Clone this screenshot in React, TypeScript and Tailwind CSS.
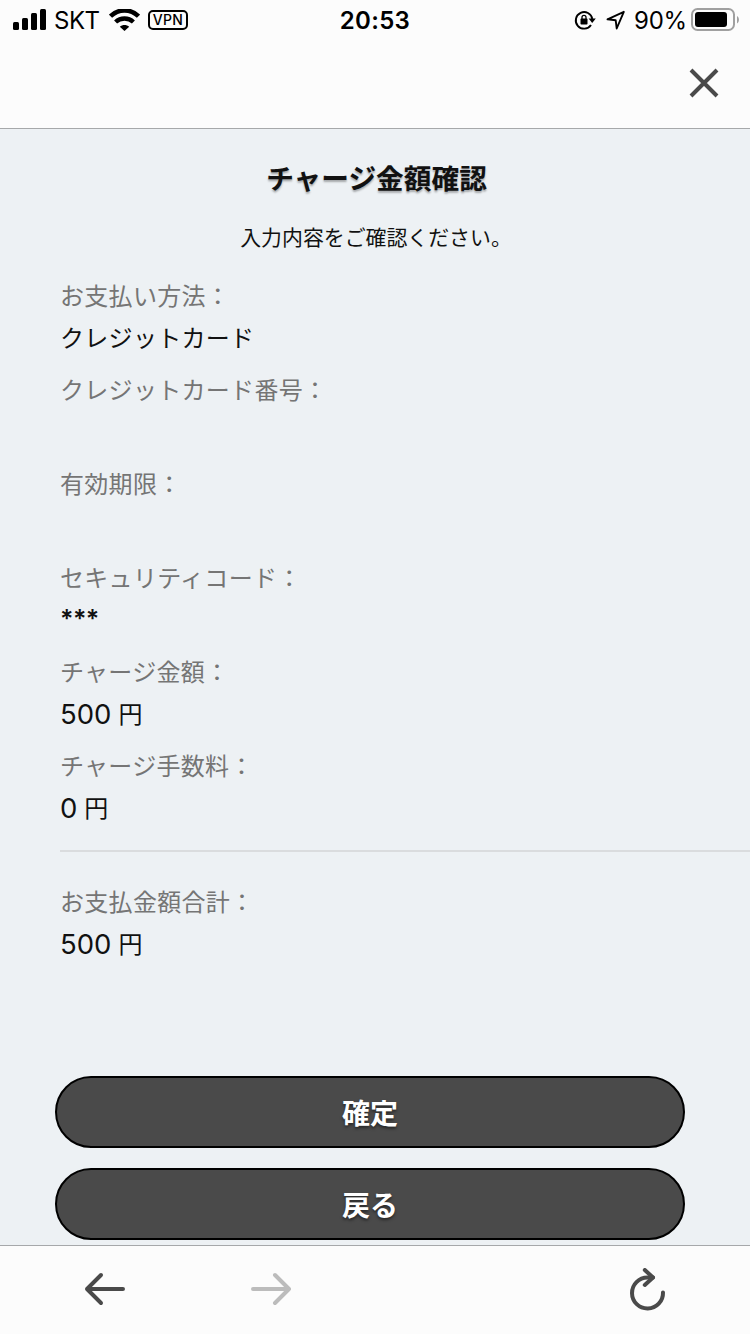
const jp = "font-['Noto_Sans_CJK_JP',sans-serif]";
const latin = "font-['Inter','Noto_Sans_CJK_JP',sans-serif]";

type Item = { label: string; value?: string; amount?: string; mask?: string };

const items: Item[] = [
  { label: "お支払い方法：", value: "クレジットカード" },
  { label: "クレジットカード番号：" },
  { label: "有効期限：" },
  { label: "セキュリティコード：", mask: "***" },
  { label: "チャージ金額：", amount: "500" },
  { label: "チャージ手数料：", amount: "0" },
];

function StatusBar() {
  return (
    <div className={`grid h-10 grid-cols-3 items-center text-black ${latin}`}>
      <div className="flex items-center pl-[13px]">
        <svg width="34" height="22" viewBox="0 0 34 22" fill="currentColor">
          <rect x="0" y="13" width="6" height="8" rx="1.5" />
          <rect x="9" y="9" width="6" height="12" rx="1.5" />
          <rect x="18" y="4" width="6" height="17" rx="1.5" />
          <rect x="27" y="0" width="6" height="21" rx="1.5" />
        </svg>
        <span className="ml-[7px] w-[47px] pt-[2px] text-[24px] leading-9 tracking-[-0.5px]">SKT</span>
        <svg className="ml-[8px]" width="31" height="22" viewBox="0 0 31 22" fill="none" stroke="currentColor">
          <path d="M1.5 7.2C9.5-.5 21.5-.5 29.5 7.2" strokeWidth="4.6" />
          <path d="M6.6 13c5-4.7 12.8-4.7 17.8 0" strokeWidth="4.4" />
          <path d="M10.8 17.8c2.7-2.4 6.7-2.4 9.4 0L15.500 22z" fill="currentColor" stroke="none" />
        </svg>
        <span className="ml-[8px] flex h-5 w-10 items-center justify-center rounded-[5px] border-2 border-black text-[14px] leading-none font-medium tracking-[0.4px]">
          VPN
        </span>
      </div>
      <div className="pt-[2px] text-center text-[24px] leading-9 font-semibold tracking-[0.3px]">20:53</div>
      <div className="flex items-center justify-end pr-[10px]">
        <svg width="22" height="20" viewBox="0 0 22 20" fill="none" stroke="currentColor">
          <path d="M18.3 9A8.300 8.300 0 1 0 17 15" strokeWidth="1.900" />
          <path d="M14.600 8.500h7.200L18.200 13z" fill="currentColor" stroke="none" />
          <rect x="6.500" y="8.600" width="7" height="6" rx=".8" fill="currentColor" stroke="none" />
          <path d="M8 9.200V7.300a2 2 0 0 1 4 0v1.900" strokeWidth="1.300" />
        </svg>
        <svg className="ml-[10px]" width="20" height="20" viewBox="0 0 20 20" fill="none" stroke="currentColor">
          <path d="M17.800 1.800L1.500 9.300l8.200 1L10.700 18.500z" strokeWidth="1.900" strokeLinejoin="round" />
        </svg>
        <span className="ml-[8px] w-[51px] pt-[2px] text-[24px] leading-9 tracking-[-0.2px]">90%</span>
        <svg className="ml-[6px]" width="49" height="24" viewBox="0 0 49 24" fill="none">
          <rect x="1" y="1" width="42" height="21" rx="5.500" stroke="#a0a0a0" strokeWidth="2" />
          <rect x="4" y="4" width="32" height="15" rx="3" fill="#000" />
          <path d="M46 8c2.600 1.500 2.600 6 0 7.500z" fill="#a0a0a0" />
        </svg>
      </div>
    </div>
  );
}

function Row({ label, value, amount, mask }: Item) {
  return (
    <div className="h-[94px] text-[24px] leading-[42px] tracking-[0.3px]">
      <dt className="text-[#757575]">{label}</dt>
      <dd className="h-[42px] text-[#111]">
        {value}
        {mask && (
          <span className={`block pt-[3px] text-[25px] leading-[36px] font-semibold tracking-[-0.6px] ${latin}`}>{mask}</span>
        )}
        {amount && (
          <span className="flex">
            <span className={`pt-px text-[27.5px] tracking-normal ${latin}`}>{amount}</span>
            <span className="ml-[7px]">円</span>
          </span>
        )}
      </dd>
    </div>
  );
}

function ActionButton({ children }: { children: string }) {
  return (
    <button
      type="button"
      className="h-[72px] w-[630px] rounded-full border-2 border-black bg-[#4a4a4a] pb-px text-[28px] leading-none font-bold text-white [text-shadow:0_2px_3px_rgba(0,0,0,0.5)]"
    >
      {children}
    </button>
  );
}

export default function App() {
  return (
    <div className={`flex h-[1334px] w-[750px] flex-col overflow-hidden bg-[#edf1f4] ${jp}`}>
      <header className="h-[129px] shrink-0 border-b border-[#a6a8aa] bg-[#fcfcfc]">
        <StatusBar />
        <div className="flex justify-end pt-[28px] pr-[31px]">
          <button type="button" aria-label="閉じる">
            <svg width="30" height="30" viewBox="0 0 30 30" stroke="#4a4a4a" strokeWidth="4">
              <path d="M2 2l26 26M28 2L2 28" />
            </svg>
          </button>
        </div>
      </header>

      <main className="flex-1 overflow-hidden">
        <h1 className="mt-[28px] pl-[3px] text-center text-[27.7px] leading-[40px] font-bold text-[#111] [text-shadow:0_2px_2px_rgba(0,0,0,0.3)]">
          チャージ金額確認
        </h1>
        <p className="mt-[24px] pl-[2px] text-center text-[20.9px] leading-[30px] text-[#111]">
          入力内容をご確認ください。
        </p>

        <dl className="mt-[23px] pl-[60px]">
          {items.map((item) => (
            <Row key={item.label} {...item} />
          ))}
          <div className="mt-[12px] border-t-2 border-[#dadcde] pt-[28px]">
            <Row label="お支払金額合計：" amount="500" />
          </div>
        </dl>

        <div className="mt-[102px] flex flex-col gap-5 pl-[55px]">
          <ActionButton>確定</ActionButton>
          <ActionButton>戻る</ActionButton>
        </div>
      </main>

      <footer className="flex h-[89px] shrink-0 items-start border-t border-[#a6a8aa] bg-[#fcfcfc] pt-[22px] pl-[84px]">
        <svg width="42" height="42" viewBox="0 0 42 42" fill="none" stroke="#4a4a4a" strokeWidth="4" strokeLinecap="round" strokeLinejoin="round">
          <path d="M39 21H3M17 7L3 21l14 14" />
        </svg>
        <svg className="ml-[124px]" width="42" height="42" viewBox="0 0 42 42" fill="none" stroke="#bcbcbc" strokeWidth="4" strokeLinecap="round" strokeLinejoin="round">
          <path d="M3 21h36M25 7l14 14-14 14" />
        </svg>
        <svg className="ml-[337px]" width="38" height="44" viewBox="0 0 38 44" fill="none" stroke="#4a4a4a" strokeWidth="4" strokeLinecap="round" strokeLinejoin="round">
          <path d="M34 24.500A15.500 15.500 0 1 1 18.500 9.500H24" />
          <path d="M15.800 2l8.200 7.500-8.200 7.500" />
        </svg>
      </footer>
    </div>
  );
}
